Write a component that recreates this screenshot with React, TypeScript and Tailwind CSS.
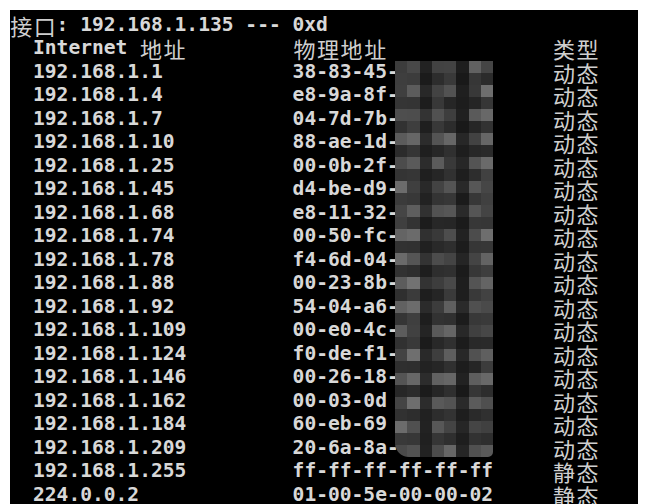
import React from "react";

const rows: [string, string, string][] = [
  ["192.168.1.1", "38-83-45-", "动态"],
  ["192.168.1.4", "e8-9a-8f-", "动态"],
  ["192.168.1.7", "04-7d-7b-", "动态"],
  ["192.168.1.10", "88-ae-1d-", "动态"],
  ["192.168.1.25", "00-0b-2f-", "动态"],
  ["192.168.1.45", "d4-be-d9-", "动态"],
  ["192.168.1.68", "e8-11-32-", "动态"],
  ["192.168.1.74", "00-50-fc-", "动态"],
  ["192.168.1.78", "f4-6d-04-", "动态"],
  ["192.168.1.88", "00-23-8b-", "动态"],
  ["192.168.1.92", "54-04-a6-", "动态"],
  ["192.168.1.109", "00-e0-4c-", "动态"],
  ["192.168.1.124", "f0-de-f1-", "动态"],
  ["192.168.1.146", "00-26-18-", "动态"],
  ["192.168.1.162", "00-03-0d", "动态"],
  ["192.168.1.184", "60-eb-69", "动态"],
  ["192.168.1.209", "20-6a-8a-", "动态"],
  ["192.168.1.255", "ff-ff-ff-ff-ff-ff", "静态"],
  ["224.0.0.2", "01-00-5e-00-00-02", "静态"],
];

const colF = [0.8, 0.85, 0.3, 0.7, 0.75, 0.22, 0.7, 0.85];

function gray(r: number, c: number) {
  const h = Math.sin(r * 12.9898 + c * 78.233) * 43758.5453;
  const n = h - Math.floor(h);
  const rowF = r % 2 === 0 ? 1 : 0.5;
  const v = Math.round(18 + 95 * colF[c] * rowF * (0.55 + 0.65 * n));
  return `rgb(${v},${v},${v})`;
}

function Cjk({ text }: { text: string }) {
  return (
    <>
      {text.split("").map((ch, i) => (
        <span
          key={i}
          className="inline-block w-[23.6px] text-center text-[22px] leading-[22px] font-normal text-[#cfcfcf] [font-family:'Noto_Sans_CJK_SC',sans-serif]"
        >
          {ch}
        </span>
      ))}
    </>
  );
}

export default function App() {
  const mosaicRows = 33;
  return (
    <div className="w-[650px] h-[504px] bg-white overflow-hidden">
      <div className="relative ml-[10px] mt-[10px] w-[628px] h-[494px] bg-black overflow-hidden pt-[3px] text-[#d8d8d8] font-bold text-[19.6px] leading-[22px] [font-family:'DejaVu_Sans_Mono',monospace] whitespace-pre">
        <div className="h-[23.5px] flex items-center -ml-[0.6px]">
          <Cjk text="接口" />
          <span>: 192.168.1.135 --- 0xd</span>
        </div>
        <div className="h-[23.5px] flex items-center pl-[23px]">
          <div className="w-[259.6px] flex items-center">
            <span>Internet </span>
            <Cjk text="地址" />
          </div>
          <div className="w-[259.6px] flex items-center">
            <Cjk text="物理地址" />
          </div>
          <div className="flex items-center">
            <Cjk text="类型" />
          </div>
        </div>
        {rows.map(([ip, mac, type], i) => (
          <div key={i} className="h-[23.5px] flex items-center pl-[23px]">
            <div className="w-[259.6px]">{ip}</div>
            <div className="w-[259.6px]">{mac}</div>
            <div className="flex items-center">
              <Cjk text={type} />
            </div>
          </div>
        ))}
        <div className="absolute left-[385px] top-[51px] w-[98px] grid grid-cols-8 rounded-bl-[14px] rounded-br-[5px] overflow-hidden">
          {Array.from({ length: mosaicRows * 8 }).map((_, k) => {
            const r = Math.floor(k / 8);
            const c = k % 8;
            return (
              <div
                key={k}
                className="h-[12px]"
                style={{ backgroundColor: gray(r, c) }}
              />
            );
          })}
        </div>
      </div>
    </div>
  );
}
